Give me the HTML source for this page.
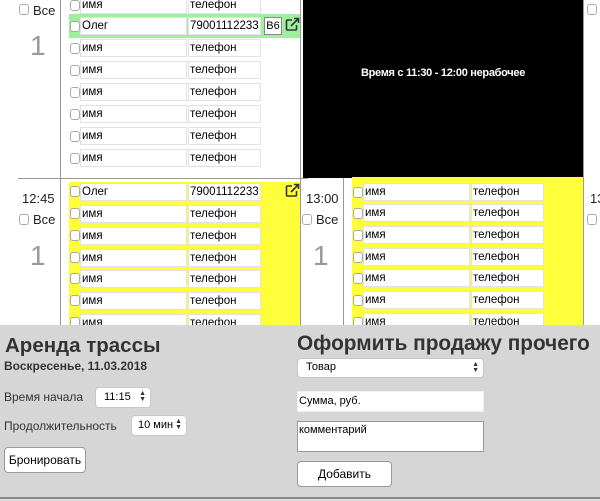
<!DOCTYPE html>
<html><head><meta charset="utf-8">
<style>
*{box-sizing:border-box;margin:0;padding:0}
body{width:600px;height:501px;overflow:hidden;background:#fff;font-family:"Liberation Sans",Arial,sans-serif;position:relative;font-size:12px;color:#000}
.a{position:absolute}
.cb{position:absolute;width:10px;height:11px;border:1px solid #aaa;border-radius:3px;background:#fff}
.in{position:absolute;height:18px;border:1px solid #e2e2e2;background:#fff;font-size:11.5px;line-height:16px;padding-left:1px;white-space:nowrap;overflow:hidden}
.vl{position:absolute;width:1px;background:#999}
.hl{position:absolute;height:1px;background:#999}
.t{position:absolute;font-size:13px;color:#222}
.one{position:absolute;font-size:28px;color:#999}
.sel{position:absolute;background:#fff;border:1px solid #c8c8c8;border-radius:4px;font-size:11px;line-height:18px;padding-left:8px}
.arr{position:absolute;right:4px;top:3px;font-size:7px;line-height:6px;color:#333}
.btn{position:absolute;background:#fff;border:1px solid #999;border-radius:4px;font-size:12px;text-align:center}
</style></head><body>

<div class="vl" style="left:60px;top:0;height:325px"></div>
<div class="vl" style="left:300px;top:0;height:325px"></div>
<div class="vl" style="left:343px;top:178px;height:147px"></div>
<div class="vl" style="left:583px;top:0;height:325px"></div>
<div class="hl" style="left:18px;top:178px;width:290px"></div>

<div class="cb" style="left:19px;top:4px"></div><div class="t" style="left:33px;top:3px">Все</div>
<div class="one" style="left:30px;top:30px">1</div>
<div class="a" style="left:69px;top:14px;width:231px;height:24px;background:#9ef09a"></div>

<div class="cb" style="left:70px;top:0px"></div><div class="in" style="left:80px;top:-4px;width:107px">имя</div><div class="in" style="left:188px;top:-4px;width:73px">телефон</div>
<div class="cb" style="left:70px;top:21px"></div><div class="in" style="left:80px;top:17px;width:107px">Олег</div><div class="in" style="left:188px;top:17px;width:73px">79001112233</div>
<div class="a" style="left:264px;top:17px;width:18px;height:18px;border:1px solid #888;background:#fff;font-size:11px;line-height:16px;text-align:center">B6</div>
<svg class="a" style="left:285px;top:17px" width="15" height="15" viewBox="0 0 15 15"><path d="M7 3H2.5a1 1 0 0 0-1 1v8a1 1 0 0 0 1 1h8a1 1 0 0 0 1-1V8" fill="none" stroke="#333" stroke-width="1.6"/><path d="M6 9L13 2M9 1.5h4.5V6" fill="none" stroke="#333" stroke-width="1.6"/></svg>
<div class="cb" style="left:70px;top:43px"></div><div class="in" style="left:80px;top:39px;width:107px">имя</div><div class="in" style="left:188px;top:39px;width:73px">телефон</div>
<div class="cb" style="left:70px;top:65px"></div><div class="in" style="left:80px;top:61px;width:107px">имя</div><div class="in" style="left:188px;top:61px;width:73px">телефон</div>
<div class="cb" style="left:70px;top:87px"></div><div class="in" style="left:80px;top:83px;width:107px">имя</div><div class="in" style="left:188px;top:83px;width:73px">телефон</div>
<div class="cb" style="left:70px;top:109px"></div><div class="in" style="left:80px;top:105px;width:107px">имя</div><div class="in" style="left:188px;top:105px;width:73px">телефон</div>
<div class="cb" style="left:70px;top:131px"></div><div class="in" style="left:80px;top:127px;width:107px">имя</div><div class="in" style="left:188px;top:127px;width:73px">телефон</div>
<div class="cb" style="left:70px;top:153px"></div><div class="in" style="left:80px;top:149px;width:107px">имя</div><div class="in" style="left:188px;top:149px;width:73px">телефон</div>

<div class="a" style="left:303px;top:0;width:280px;height:178px;background:#000;color:#fff;font-size:11px;text-align:center;line-height:146px;font-weight:bold;letter-spacing:-0.3px">Время с 11:30 - 12:00 нерабочее</div>
<div class="cb" style="left:587px;top:4px"></div>

<div class="t" style="left:22px;top:191px">12:45</div>
<div class="cb" style="left:19px;top:214px"></div><div class="t" style="left:33px;top:212px">Все</div>
<div class="one" style="left:30px;top:240px">1</div>
<div class="a" style="left:69px;top:182px;width:231px;height:143px;background:#fefe3a"></div>
<svg class="a" style="left:285px;top:183px" width="15" height="15" viewBox="0 0 15 15"><path d="M7 3H2.5a1 1 0 0 0-1 1v8a1 1 0 0 0 1 1h8a1 1 0 0 0 1-1V8" fill="none" stroke="#333" stroke-width="1.6"/><path d="M6 9L13 2M9 1.5h4.5V6" fill="none" stroke="#333" stroke-width="1.6"/></svg>
<div class="cb" style="left:70px;top:186px"></div><div class="in" style="left:80px;top:183px;width:107px">Олег</div><div class="in" style="left:188px;top:183px;width:73px">79001112233</div>
<div class="cb" style="left:70px;top:208px"></div><div class="in" style="left:80px;top:205px;width:107px">имя</div><div class="in" style="left:188px;top:205px;width:73px">телефон</div>
<div class="cb" style="left:70px;top:230px"></div><div class="in" style="left:80px;top:227px;width:107px">имя</div><div class="in" style="left:188px;top:227px;width:73px">телефон</div>
<div class="cb" style="left:70px;top:252px"></div><div class="in" style="left:80px;top:249px;width:107px">имя</div><div class="in" style="left:188px;top:249px;width:73px">телефон</div>
<div class="cb" style="left:70px;top:273px"></div><div class="in" style="left:80px;top:270px;width:107px">имя</div><div class="in" style="left:188px;top:270px;width:73px">телефон</div>
<div class="cb" style="left:70px;top:295px"></div><div class="in" style="left:80px;top:292px;width:107px">имя</div><div class="in" style="left:188px;top:292px;width:73px">телефон</div>
<div class="cb" style="left:70px;top:317px"></div><div class="in" style="left:80px;top:314px;width:107px">имя</div><div class="in" style="left:188px;top:314px;width:73px">телефон</div>

<div class="t" style="left:306px;top:191px">13:00</div>
<div class="cb" style="left:302px;top:214px"></div><div class="t" style="left:316px;top:212px">Все</div>
<div class="one" style="left:313px;top:240px">1</div>
<div class="a" style="left:352px;top:177px;width:231px;height:148px;background:#fefe3a"></div>
<div class="cb" style="left:353px;top:187px"></div><div class="in" style="left:363px;top:183px;width:107px">имя</div><div class="in" style="left:471px;top:183px;width:73px">телефон</div>
<div class="cb" style="left:353px;top:208px"></div><div class="in" style="left:363px;top:204px;width:107px">имя</div><div class="in" style="left:471px;top:204px;width:73px">телефон</div>
<div class="cb" style="left:353px;top:230px"></div><div class="in" style="left:363px;top:226px;width:107px">имя</div><div class="in" style="left:471px;top:226px;width:73px">телефон</div>
<div class="cb" style="left:353px;top:252px"></div><div class="in" style="left:363px;top:248px;width:107px">имя</div><div class="in" style="left:471px;top:248px;width:73px">телефон</div>
<div class="cb" style="left:353px;top:273px"></div><div class="in" style="left:363px;top:269px;width:107px">имя</div><div class="in" style="left:471px;top:269px;width:73px">телефон</div>
<div class="cb" style="left:353px;top:295px"></div><div class="in" style="left:363px;top:291px;width:107px">имя</div><div class="in" style="left:471px;top:291px;width:73px">телефон</div>
<div class="cb" style="left:353px;top:317px"></div><div class="in" style="left:363px;top:313px;width:107px">имя</div><div class="in" style="left:471px;top:313px;width:73px">телефон</div>
<div class="t" style="left:590px;top:191px">13</div>
<div class="cb" style="left:587px;top:214px"></div>

<div class="a" style="left:0;top:325px;width:600px;height:172px;background:#d6d6d6"></div>
<div class="a" style="left:0;top:497px;width:600px;height:4px;background:#888;border-bottom:2px solid #ddd"></div>
<div class="a" style="left:5px;top:334px;font-size:20.5px;font-weight:bold;color:#333">Аренда трассы</div>
<div class="a" style="left:4px;top:359px;font-size:12px;font-weight:bold;color:#333">Воскресенье, 11.03.2018</div>
<div class="a" style="left:4px;top:390px;font-size:12px;color:#333">Время начала</div>
<div class="sel" style="left:95px;top:387px;width:56px;height:21px">11:15<span class="arr">▲<br>▼</span></div>
<div class="a" style="left:4px;top:419px;font-size:12px;color:#333">Продолжительность</div>
<div class="sel" style="left:131px;top:415px;width:56px;height:21px;padding-left:6px">10 мин<span class="arr">▲<br>▼</span></div>
<div class="btn" style="left:4px;top:447px;width:82px;height:26px;line-height:24px">Бронировать</div>

<div class="a" style="left:297px;top:332px;font-size:20.8px;font-weight:bold;color:#333">Оформить продажу прочего</div>
<div class="sel" style="left:297px;top:358px;width:187px;height:20px;line-height:17px;font-size:11px">Товар<span class="arr">▲<br>▼</span></div>
<div class="in" style="left:297px;top:391px;width:187px;height:21px;line-height:19px;font-size:11px;border-color:#eee">Сумма, руб.</div>
<div class="in" style="left:297px;top:421px;width:187px;height:31px;line-height:16px;font-size:11px;border:1px solid #999">комментарий</div>
<div class="btn" style="left:297px;top:461px;width:95px;height:26px;line-height:24px">Добавить</div>
</body></html>
